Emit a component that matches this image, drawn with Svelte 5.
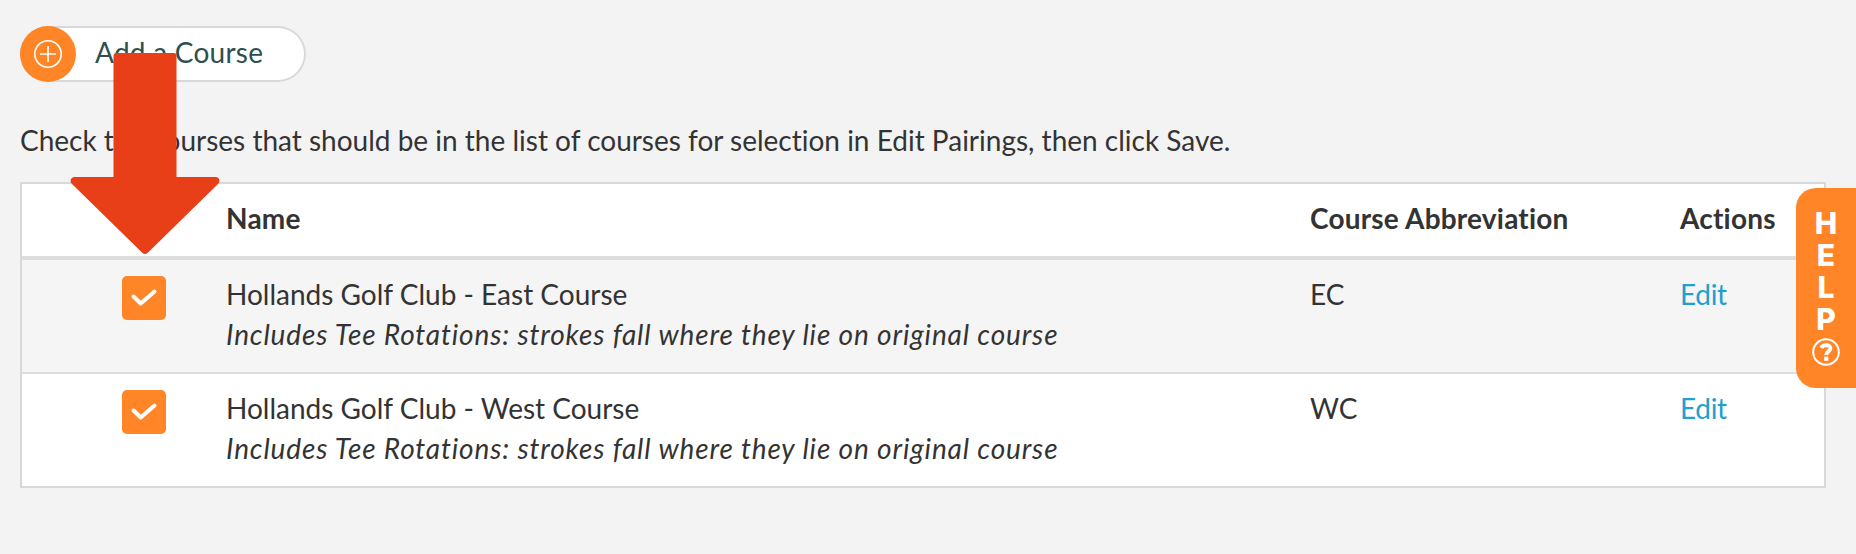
<script lang="ts">
	interface Course {
		name: string;
		note: string;
		abbreviation: string;
		selected: boolean;
	}

	let courses: Course[] = $state([
		{
			name: 'Hollands Golf Club - East Course',
			note: 'Includes Tee Rotations: strokes fall where they lie on original course',
			abbreviation: 'EC',
			selected: true
		},
		{
			name: 'Hollands Golf Club - West Course',
			note: 'Includes Tee Rotations: strokes fall where they lie on original course',
			abbreviation: 'WC',
			selected: true
		}
	]);
</script>

<main class="page">
	<button class="add-course">
		<span class="add-icon">
			<svg width="30" height="30" viewBox="0 0 30 30" fill="none" stroke="#fff" stroke-width="1.6">
				<circle cx="15" cy="15" r="13.2" />
				<path d="M15 7v16M7 15h16" />
			</svg>
		</span>
		<span class="add-label">Add a Course</span>
	</button>

	<p class="intro">
		<span>Check the courses that should be in the list of courses for selection in Edit Pairings, then click Save.</span>
	</p>

	<div class="table">
		<div class="row header">
			<span></span>
			<span>Name</span>
			<span>Course Abbreviation</span>
			<span>Actions</span>
		</div>
		{#each courses as course (course.abbreviation)}
			<div class="row">
				<button
					class="checkbox"
					class:selected={course.selected}
					role="checkbox"
					aria-checked={course.selected}
					aria-label={course.name}
					onclick={() => (course.selected = !course.selected)}
				>
					{#if course.selected}
						<svg width="44" height="44" viewBox="0 0 44 44" fill="none" stroke="#fff" stroke-width="4">
							<path d="M11.5 20.5l7.2 7L32.5 15.5" stroke-linecap="round" stroke-linejoin="round" />
						</svg>
					{/if}
				</button>
				<div class="course">
					<span>{course.name}</span>
					<em class="note">{course.note}</em>
				</div>
				<span>{course.abbreviation}</span>
				<a class="edit" href="#edit">Edit</a>
			</div>
		{/each}
	</div>

	<svg class="arrow" width="150" height="204" viewBox="0 0 150 204" fill="#e83f18">
		<path
			d="M46.5 1H104Q106.5 1 106.5 4V125H146Q149.5 125.5 149.5 129Q149.3 130.5 148 132L77.5 201Q75 203 72.5 201L2 132Q.5 130.5 .5 128.5Q1 125.5 4 125H43.5V4Q43.5 1 46.5 1Z"
		/>
	</svg>

	<aside class="help">
		{#each 'HELP' as letter}
			<span>{letter}</span>
		{/each}
		<svg width="28" height="28" viewBox="0 0 28 28" fill="none" stroke="#fff">
			<circle cx="14" cy="14" r="12.8" stroke-width="2" />
			<path d="M9.3 9.8C11 6.2 18.6 6.2 18.4 10.5C18.3 13.5 14.2 13.3 14.2 17" stroke-width="3.9" />
			<path d="M14.2 18.6v4.2" stroke-width="4.2" />
		</svg>
	</aside>
</main>

<style>
	:global(body) {
		background: #f3f3f3;
	}

	.page {
		position: relative;
		box-sizing: border-box;
		height: 554px;
		padding: 26px 30px 0 20px;
		font-family: Lato, 'Open Sans', sans-serif;
		font-size: 28px;
		font-variant-ligatures: none;
		line-height: 40px;
		color: #333;
		overflow: hidden;
	}

	button {
		padding: 0;
		border: 0;
		font: inherit;
		cursor: pointer;
	}

	.add-course {
		display: flex;
		align-items: center;
		box-sizing: border-box;
		width: 286px;
		height: 56px;
		background: #fff;
		border-radius: 28px;
		box-shadow: inset 0 0 0 2px #d8d8d8;
		color: #2f4f4f;
	}

	.add-icon {
		display: flex;
		align-items: center;
		justify-content: center;
		width: 56px;
		height: 56px;
		margin-right: 19px;
		border-radius: 50%;
		background: #ff8527;
	}

	.add-label {
		margin-top: -4px;
		letter-spacing: 0.25px;
		white-space: nowrap;
	}

	.intro {
		margin: 38px 0 22px;
		white-space: nowrap;
	}

	.table {
		border: 2px solid #d8d8d8;
		background: #fff;
	}

	.row {
		display: grid;
		grid-template-columns: 204px 1084px 370px 1fr;
		box-sizing: border-box;
		height: 114px;
		padding-top: 14px;
		border-bottom: 2px solid #ddd;
		white-space: nowrap;
	}

	.row:nth-child(even) {
		background: #f5f5f5;
	}

	.row:last-child {
		height: 112px;
		border-bottom: 0;
	}

	.header {
		height: 76px;
		border-bottom-width: 4px;
		font-weight: 700;
		letter-spacing: 0.2px;
	}

	.checkbox {
		width: 44px;
		height: 44px;
		margin: 2px 0 0 100px;
		border-radius: 5px;
		background: #fff;
		box-shadow: inset 0 0 0 2px #d8d8d8;
	}

	.checkbox.selected {
		background: #ff8527;
		box-shadow: none;
	}

	.checkbox svg {
		display: block;
	}

	.course {
		display: flex;
		flex-direction: column;
		align-items: flex-start;
	}

	.note {
		letter-spacing: 0.86px;
	}

	.edit {
		color: #219fcd;
		letter-spacing: -0.3px;
		text-decoration: none;
	}

	.arrow {
		position: absolute;
		top: 52px;
		left: 70px;
	}

	.help {
		position: absolute;
		top: 188px;
		right: 0;
		display: flex;
		flex-direction: column;
		align-items: center;
		box-sizing: border-box;
		width: 60px;
		height: 200px;
		padding-top: 19px;
		border-radius: 20px 0 0 20px;
		background: #ff8527;
		color: #fff;
		font-family: Inter, sans-serif;
		font-size: 30px;
		font-weight: 800;
		line-height: 32px;
	}

	.help svg {
		margin-top: 3px;
	}
</style>
